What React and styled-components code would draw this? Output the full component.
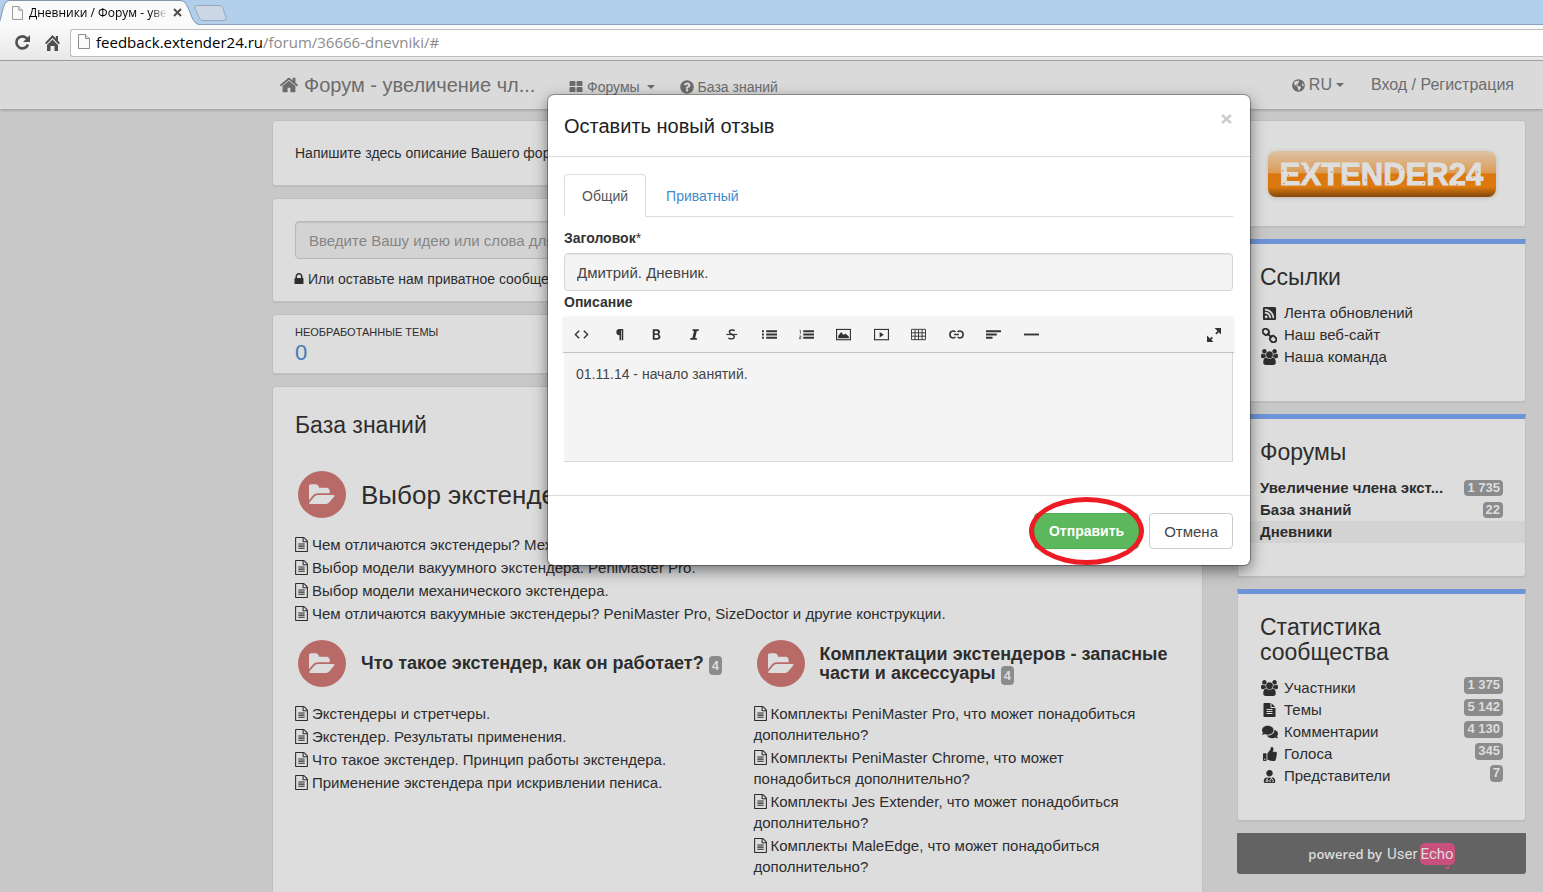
import React from 'react';
import styled, { createGlobalStyle, css } from 'styled-components';
import { FaComments, FaGlobeAmericas, FaRssSquare, FaThumbsUp, FaUserMd } from 'react-icons/fa';

const Global = createGlobalStyle`
  *, *::before, *::after { box-sizing: border-box; }
  body {
    margin: 0;
    background: #c8c8c8;
    color: #2d2d2d;
    font: 15px/21px "Liberation Sans", Arial, sans-serif;
  }
  a { color: inherit; text-decoration: none; }
  ul, h1, h2, h3, p { margin: 0; padding: 0; list-style: none; font-weight: normal; }
  button, input, textarea { font-family: inherit; margin: 0; }
`;

/* ---------- icons ---------- */

const Svg = styled.svg`
  display: inline-block;
  flex: none;
  fill: currentColor;
`;

const PATHS = {
  home: 'M1472 992v480q0 26-19 45t-45 19h-384v-384h-256v384h-384q-26 0-45-19t-19-45v-480q0-1 .5-3t.5-3l575-474 575 474q1 2 1 6zm223-69l-62 74q-8 9-21 11h-3q-13 0-21-7l-692-577-692 577q-12 8-24 7-13-2-21-11l-62-74q-8-10-7-23.5t11-21.5l719-599q32-26 76-26t76 26l244 204v-195q0-14 9-23t23-9h192q14 0 23 9t9 23v408l219 182q10 8 11 21.5t-7 23.5z',
  thLarge: 'M832 1024v384q0 52-38 90t-90 38h-512q-52 0-90-38t-38-90v-384q0-52 38-90t90-38h512q52 0 90 38t38 90zm0-768v384q0 52-38 90t-90 38h-512q-52 0-90-38t-38-90v-384q0-52 38-90t90-38h512q52 0 90 38t38 90zm896 768v384q0 52-38 90t-90 38h-512q-52 0-90-38t-38-90v-384q0-52 38-90t90-38h512q52 0 90 38t38 90zm0-768v384q0 52-38 90t-90 38h-512q-52 0-90-38t-38-90v-384q0-52 38-90t90-38h512q52 0 90 38t38 90z',
  question: 'M1024 1376v-192q0-14-9-23t-23-9h-192q-14 0-23 9t-9 23v192q0 14 9 23t23 9h192q14 0 23-9t9-23zm256-672q0-88-55.5-163t-138.5-116-170-41q-243 0-371 213-15 24 8 42l132 100q7 6 19 6 16 0 25-12 53-68 86-92 34-24 86-24 48 0 85.5 26t37.5 59q0 38-20 61t-68 45q-63 28-115.5 86.5t-52.5 125.5v36q0 14 9 23t23 9h192q14 0 23-9t9-23q0-19 21.500-49.500t54.500-49.500q32-18 49-28.500t46-35 44.500-48 28-60.500 12.500-81zm384 192q0 209-103 385.500t-279.500 279.500-385.500 103-385.500-103-279.500-279.500-103-385.500 103-385.500 279.500-279.500 385.500-103 385.500 103 279.500 279.500 103 385.500z',
  lock: 'M640 768h512v-192q0-106-75-181t-181-75-181 75-75 181v192zm832 96v576q0 40-28 68t-68 28h-960q-40 0-68-28t-28-68v-576q0-40 28-68t68-28h32v-192q0-184 132-316t316-132 316 132 132 316v192h32q40 0 68 28t28 68z',
  folder: 'M1815 952q0 31-31 66l-336 396q-43 51-120.5 86.5t-143.5 35.5h-1088q-34 0-60.500-13t-26.500-43q0-31 31-66l336-396q43-51 120.500-86.500t143.500-35.500h1088q34 0 60.500 13t26.500 43zm-343-344v160h-832q-94 0-197 47.500t-164 119.500l-337 396-5 6q0-4-.5-12.500t-.5-12.500v-960q0-92 66-158t158-66h320q92 0 158 66t66 158v32h544q92 0 158 66t66 158z',
  fileO: 'M1596 380q28 28 48 76t20 88v1152q0 40-28 68t-68 28h-1344q-40 0-68-28t-28-68v-1600q0-40 28-68t68-28h896q40 0 88 20t76 48zm-444-244v376h376q-10-29-22-41l-313-313q-12-12-41-22zm384 1528v-1024h-416q-40 0-68-28t-28-68v-416h-768v1536h1280zm-1024-864q0-14 9-23t23-9h704q14 0 23 9t9 23v64q0 14-9 23t-23 9h-704q-14 0-23-9t-9-23v-64zm736 224q14 0 23 9t9 23v64q0 14-9 23t-23 9h-704q-14 0-23-9t-9-23v-64q0-14 9-23t23-9h704zm0 256q14 0 23 9t9 23v64q0 14-9 23t-23 9h-704q-14 0-23-9t-9-23v-64q0-14 9-23t23-9h704z',
  file: 'M1596 476q14 14 28 36h-472v-472q22 14 36 28zm-476 164h544v1056q0 40-28 68t-68 28h-1344q-40 0-68-28t-28-68v-1600q0-40 28-68t68-28h800v544q0 40 28 68t68 28zm160 736v-64q0-14-9-23t-23-9h-704q-14 0-23 9t-9 23v64q0 14 9 23t23 9h704q14 0 23-9t9-23zm0-256v-64q0-14-9-23t-23-9h-704q-14 0-23 9t-9 23v64q0 14 9 23t23 9h704q14 0 23-9t9-23zm0-256v-64q0-14-9-23t-23-9h-704q-14 0-23 9t-9 23v64q0 14 9 23t23 9h704q14 0 23-9t9-23z',
  users: 'M593 896q-162 5-265 128h-134q-82 0-138-40.5t-56-118.500q0-353 124-353 6 0 43.500 21t97.500 42.500 119 21.500q67 0 133-23-5 37-5 66 0 139 81 256zm1071 637q0 120-73 189.500t-194 69.500h-874q-121 0-194-69.500t-73-189.500q0-53 3.500-103.500t14-109 26.500-108.500 43-97.500 62-81 85.500-53.500 111.500-20q10 0 43 21.500t73 48 107 48 135 21.500 135-21.500 107-48 73-48 43-21.500q61 0 111.500 20t85.500 53.500 62 81 43 97.500 26.500 108.500 14 109 3.500 103.500zm-1024-1277q0 106-75 181t-181 75-181-75-75-181 75-181 181-75 181 75 75 181zm704 384q0 159-112.500 271.500t-271.500 112.500-271.500-112.500-112.500-271.500 112.500-271.500 271.500-112.500 271.500 112.500 112.500 271.500zm576 225q0 78-56 118.500t-138 40.500h-134q-103-123-265-128 81-117 81-256 0-29-5-66 66 23 133 23 59 0 119-21.500t97.500-42.500 43.500-21q124 0 124 353zm-128-609q0 106-75 181t-181 75-181-75-75-181 75-181 181-75 181 75 75 181z',
};

const Glyph = ({ name, size = 16, width, box = '0 0 1792 1792' }) => (
  <Svg width={width || size} height={size} viewBox={box} aria-hidden="true">
    <path d={PATHS[name]} />
  </Svg>
);

const ChainIcon = () => (
  <Svg width="15" height="15" viewBox="0 0 16 16" aria-hidden="true">
    <g fill="none" stroke="currentColor" strokeWidth="2" transform="rotate(45 8 8)">
      <rect x="-1" y="5" width="7" height="6" rx="3" />
      <rect x="10" y="5" width="7" height="6" rx="3" />
      <path d="M4.500 8h7" />
    </g>
  </Svg>
);

const PageIcon = ({ width, height }) => (
  <Svg width={width} height={height} viewBox="0 0 12 15" aria-hidden="true">
    <path d="M.5.500h7l4 4v10h-11z" fill="#fafafa" stroke="#8d8d8d" />
    <path d="M7.500.500v4h4" fill="#e4e4e4" stroke="#8d8d8d" />
  </Svg>
);

const EDITOR_ICONS = {
  code: <path d="M5.500 4 1.500 8l4 4M10.500 4l4 4-4 4" fill="none" stroke="currentColor" strokeWidth="1.500" />,
  paragraph: <path d="M12 2v12h-1.500V3.500H9.800V14H8V8.800a3.400 3.400 0 0 1 0-6.800z" />,
  bold: <path fillRule="evenodd" d="M4 2.500H8.500C11 2.500 11.700 4 11.700 5.200 11.700 6.500 10.900 7.300 10.200 7.600 11.300 8 12.200 8.900 12.200 10.400 12.200 12.300 10.800 13.500 8.700 13.500H4zM6 4.200V7H8C9.200 7 9.600 6.400 9.600 5.600S9.100 4.200 8 4.200zM6 8.600V11.800H8.300C9.500 11.800 10.100 11.100 10.100 10.200S9.500 8.600 8.300 8.600z" />,
  italic: <path d="M6 2.500h6.500v1.700h-2L8.700 11.800H10.500V13.500H3.500v-1.700h2.200L7.500 4.200H6z" />,
  strike: (
    <g fill="none" stroke="currentColor" strokeWidth="1.500">
      <path d="M11.500 4C10 2.800 5.700 2.700 5.700 5.300 5.700 8 11 7.500 11 10.500 11 13.200 7 13 4.700 11.800" />
      <path d="M2.500 8h11.500" strokeWidth="1.200" />
    </g>
  ),
  list: <path d="M0 3.500h2v2H0zM0 7h2v2H0zM0 10.500h2v2H0zM4.500 3.500h11.500v2h-11.500zM4.500 7h11.500v2h-11.500zM4.500 10.500h11.500v2h-11.500z" />,
  ordered: (
    <g>
      <path d="M4.500 3.500h11.500v2h-11.500zM4.500 7h11.500v2h-11.500zM4.500 10.500h11.500v2h-11.500z" />
      <path d="M.500 3.500h1v4M.500 9.500h1.500v1.500H.500v1.500H2.500" fill="none" stroke="currentColor" strokeWidth=".7" />
    </g>
  ),
  image: (
    <g>
      <rect x=".6" y="2.600" width="14.800" height="11" fill="none" stroke="currentColor" strokeWidth="1.200" />
      <path d="M2.300 12V9.500L5.500 5.200l2.500 3.300 2-1.700 3.700 3.200v2z" />
    </g>
  ),
  video: (
    <g>
      <rect x=".6" y="2.600" width="14.800" height="11" fill="none" stroke="currentColor" strokeWidth="1.200" />
      <path d="M6 5.200 10.500 8.200 6 11.200z" />
    </g>
  ),
  table: (
    <path d="M.5 2.500h15v11h-15zM.5 6.200h15M.5 9.800h15M4.300 2.500v11M8 2.500v11M11.800 2.500v11" fill="none" stroke="currentColor" />
  ),
  link: (
    <g fill="none" stroke="currentColor" strokeWidth="1.700">
      <path d="M6.800 5.500C5.500 3.700 1 3.700 1 8s4.500 4.300 5.800 2.500M9.200 5.500C10.500 3.700 15 3.700 15 8s-4.500 4.300-5.800 2.500M5.500 8h5" />
    </g>
  ),
  align: <path d="M0 3.500h16v2H0zM0 7h11.500v2H0zM0 10.500h7v2H0z" />,
  line: <path d="M0 7h16v2H0z" />,
};

const EditorIcon = ({ name }) => (
  <Svg width="15" height="15" viewBox="0 0 16 16" aria-hidden="true">
    {EDITOR_ICONS[name]}
  </Svg>
);

/* ---------- browser chrome ---------- */

const Screen = styled.div`
  display: flex;
  flex-direction: column;
  height: 100vh;
  overflow: hidden;
`;

const TabStrip = styled.div`
  display: flex;
  height: 25px;
  background: #b1cfeb;
  border-bottom: 1px solid #8ba3bd;
`;

const BrowserTab = styled.div`
  position: relative;
  display: flex;
  align-items: center;
  width: 196px;
  height: 25px;
  padding-left: 12px;
  font: 12px/16px "Open Sans", "Noto Sans", sans-serif;
  color: #000;
`;

const TabShape = styled.svg`
  position: absolute;
  inset: 0;
  z-index: 0;
`;

const TabBody = styled.div`
  position: relative;
  display: flex;
  align-items: center;
  gap: 6px;
`;

const TabTitle = styled.span`
  width: 138px;
  overflow: hidden;
  white-space: nowrap;
  mask-image: linear-gradient(to right, #000 88%, transparent);
`;

const IconButton = styled.button`
  display: flex;
  align-items: center;
  justify-content: center;
  padding: 0;
  border: 0;
  background: none;
  color: ${(p) => p.$color || '#4f4f4f'};
`;

const Toolbar = styled.div`
  display: flex;
  align-items: center;
  flex: none;
  gap: 14px;
  height: 36px;
  padding-left: 14px;
  background: linear-gradient(#fafafa, #e8e8e8);
  border-bottom: 1px solid #a6a6a6;
`;

const AddressBar = styled.div`
  display: flex;
  align-items: center;
  flex: 1;
  gap: 6px;
  height: 28px;
  margin-left: -4px;
  padding: 0 0 2px 7px;
  background: #fff;
  border: 1px solid #bdbdbd;
  border-right: 0;
  border-radius: 3px 0 0 3px;
  font: 15px/20px "Open Sans", "Noto Sans", sans-serif;
  color: #8b8b8b;
  b { font-weight: normal; color: #000; }
`;

/* ---------- site ---------- */

const Site = styled.div`
  position: relative;
  display: flex;
  flex-direction: column;
  flex: 1;
  min-height: 0;
`;

const Navbar = styled.nav`
  display: flex;
  align-items: center;
  flex: none;
  height: 48px;
  padding: 0 29px 0 279px;
  background: #dadada;
  box-shadow: 0 1px 3px rgba(0, 0, 0, 0.25);
  color: #6c6c6c;
`;

const Brand = styled.a`
  display: flex;
  align-items: center;
  gap: 5px;
  width: 290px;
  font-size: 20px;
  line-height: 24px;
  white-space: nowrap;
`;

const NavLink = styled.a`
  display: flex;
  align-items: center;
  gap: 4px;
  font-size: ${(p) => (p.$small ? 14 : 16)}px;
  line-height: 20px;
  padding-top: ${(p) => (p.$small ? 4 : 0)}px;
  margin-right: ${(p) => p.$gap || 0}px;
`;

const Caret = styled.i`
  border: 4px solid transparent;
  border-top-color: currentColor;
  border-bottom: 0;
  margin-left: ${(p) => p.$gap || 0}px;
`;

const Spacer = styled.div`flex: 1;`;

const Layout = styled.div`
  display: grid;
  grid-template-columns: minmax(0, 1fr) 289px;
  gap: 34px;
  flex: 1;
  min-height: 0;
  padding: 11px 17px 0 272px;
`;

const Column = styled.div`
  display: flex;
  flex-direction: column;
  gap: 12px;
  min-height: 0;
`;

const Card = styled.section`
  flex: ${(p) => (p.$grow ? '1 0 auto' : 'none')};
  padding: ${(p) => p.$pad};
  background: #ddd;
  border: 1px solid #bfbfbf;
  border-radius: 3px;
  box-shadow: 0 1px 0 #bdbdbd;
  ${(p) => p.$grow && css`border-bottom: 0; border-radius: 3px 3px 0 0;`}
`;

const Intro = styled.p`
  font-size: 14px;
  line-height: 20px;
`;

const SearchInput = styled.input`
  display: block;
  width: 100%;
  height: 38px;
  padding: 0 13px;
  border: 1px solid #b7b7b7;
  border-radius: 4px;
  background: #d3d3d3;
  box-shadow: inset 0 1px 1px rgba(0, 0, 0, 0.08);
  font-size: 15px;
  &::placeholder { color: #868686; opacity: 1; }
`;

const PrivateLink = styled.a`
  display: flex;
  align-items: center;
  gap: 4px;
  margin: 10px 0 0 -1px;
  font-size: 14px;
  line-height: 20px;
`;

const CounterLabel = styled.div`
  font-size: 11px;
  line-height: 14px;
  text-transform: uppercase;
`;

const CounterValue = styled.div`
  font-size: 22px;
  line-height: 27px;
  color: #3f7cb3;
`;

const Title = styled.h2`
  font-size: 23px;
  line-height: 25px;
`;

const Topics = styled.div`
  display: grid;
  grid-template-columns: 1fr 1fr;
  gap: 32px;
  margin-top: 33px;
`;

const WideTopic = styled.div`
  grid-column: 1 / -1;
  margin-bottom: -18px;
`;

const TopicHead = styled.div`
  display: flex;
  align-items: center;
  gap: 15px;
  height: 47px;
  margin: 0 -8px 16px 3px;
`;

const FolderDisc = styled.span`
  display: flex;
  align-items: center;
  justify-content: center;
  flex: none;
  width: 48px;
  height: 47px;
  border-radius: 50%;
  background: #b76a66;
  color: #ddd;
`;

const TopicTitle = styled.h3`
  font-size: ${(p) => (p.$large ? 26 : 18)}px;
  line-height: ${(p) => (p.$large ? 30 : 19)}px;
  font-weight: ${(p) => (p.$large ? 'normal' : 'bold')};
`;

const Badge = styled.span`
  display: inline-block;
  padding: ${(p) => (p.$raised ? '0 3px 2px' : '0 3px 1px')};
  border-radius: 4px;
  background: #8b8b8b;
  color: #ddd;
  font-size: 13px;
  line-height: 15px;
  font-weight: bold;
`;

const TitleBadge = styled(Badge)`
  margin: -4px 0;
  padding: 2px 3px;
  vertical-align: -1px;
`;

const ArticleList = styled.ul`
  padding-right: 16px;
  li { margin-bottom: 2px; }
  svg { margin-right: 4px; vertical-align: -2px; }
`;

const SideCard = styled.section`
  flex: none;
  padding: 21px 22px 33px;
  background: #ddd;
  border: 1px solid #bfbfbf;
  border-top: 5px solid #6e94d8;
  border-radius: 0 0 3px 3px;
  box-shadow: 0 1px 0 #bdbdbd;
`;

const SideList = styled.ul`margin-top: 12px;`;

const SideRow = styled.li`
  display: flex;
  align-items: ${(p) => (p.$raised ? 'flex-start' : 'center')};
  gap: 8px;
  height: 22px;
  line-height: 22px;
  font-weight: ${(p) => (p.$bold ? 'bold' : 'normal')};
  ${(p) => p.$active && css`
    margin: 0 -22px;
    padding: 0 22px;
    background: #d3d3d3;
  `}
  a {
    display: flex;
    align-items: center;
    gap: 5px;
    flex: 1;
    min-width: 0;
    white-space: nowrap;
  }
`;

const IconSlot = styled.i`
  display: flex;
  justify-content: center;
  width: 19px;
`;

const LogoCard = styled(Card)`
  display: flex;
  justify-content: center;
`;

const Logo = styled.a`
  position: relative;
  display: flex;
  align-items: center;
  justify-content: center;
  width: 228px;
  height: 46px;
  padding-top: 2px;
  border-radius: 8px;
  background: linear-gradient(#dcc3a6 0%, #dc9c56 47%, #da780f 50%, #dc7a10 78%, #8a4c0c 98%);
  box-shadow: 0 1px 4px rgba(90, 60, 20, 0.2);
  color: #dedede;
  font-size: 31px;
  line-height: 46px;
  font-weight: bold;
  -webkit-text-stroke: 1px #dedede;
`;

const LogoWear = styled.svg`
  position: absolute;
  inset: 0;
`;

const Powered = styled.a`
  display: flex;
  align-items: center;
  justify-content: center;
  flex: none;
  height: 41px;
  border-radius: 0 0 3px 3px;
  background: #636363;
  color: #ddd;
  font: 600 13px/20px "Open Sans", sans-serif;
`;

const UserWord = styled.b`
  margin: 0 2px 0 5px;
  font: 15px/22px Roboto, "Liberation Sans", sans-serif;
`;

const EchoWord = styled(UserWord)`
  position: relative;
  margin: 0;
  padding: 0 1px;
  border-radius: 5px;
  background: #c94f7c;
  &::after {
    content: "";
    position: absolute;
    right: 6px;
    bottom: -4px;
    border: 4px solid transparent;
    border-right-color: #c94f7c;
    border-bottom: 0;
  }
`;

/* ---------- dialog ---------- */

const Overlay = styled.div`
  position: absolute;
  inset: 0;
  padding: 34px 293px 0 548px;
`;

const Dialog = styled.form`
  position: relative;
  background: #fff;
  border-radius: 6px;
  box-shadow: 0 0 0 1px rgba(0, 0, 0, 0.3), 0 5px 15px rgba(0, 0, 0, 0.5);
  color: #333;
`;

const DialogHead = styled.header`
  display: flex;
  align-items: flex-start;
  justify-content: space-between;
  height: 62px;
  padding: 19px 17px 0 16px;
  border-bottom: 1px solid #dcdcdc;
  h2 { font-size: 20px; line-height: 24px; color: #222; }
`;

const DialogBody = styled.div`padding: 17px 17px 33px 16px;`;

const Tabs = styled.div`
  display: flex;
  height: 43px;
  border-bottom: 1px solid #ddd;
`;

const TabButton = styled.button`
  height: 43px;
  padding: 0 17px;
  border: 1px solid ${(p) => (p.$active ? '#ddd' : 'transparent')};
  border-bottom-color: ${(p) => (p.$active ? '#fff' : 'transparent')};
  border-radius: 4px 4px 0 0;
  background: ${(p) => (p.$active ? '#fff' : 'none')};
  color: ${(p) => (p.$active ? '#555' : '#428bca')};
  font-size: 14px;
  margin-right: 2px;
`;

const Field = styled.div`
  label {
    display: block;
    margin-bottom: 5px;
    font-size: 14px;
    line-height: 20px;
    font-weight: bold;
  }
  label span { font-weight: normal; }
  margin-top: ${(p) => p.$top}px;
`;

const TextInput = styled.input`
  display: block;
  width: 100%;
  height: 38px;
  padding: 0 12px;
  border: 1px solid #d5d5d5;
  border-radius: 4px;
  background: #f4f4f4;
  box-shadow: inset 0 1px 1px rgba(0, 0, 0, 0.06);
  color: #444;
  font-size: 15px;
`;

const EditorBar = styled.div`
  display: flex;
  justify-content: space-between;
  height: 36px;
  margin: 0 -1px;
  background: #f4f4f4;
  border-bottom: 1px solid #c4c4c4;
  border-radius: 3px 3px 0 0;
  box-shadow: 0 0 2px rgba(0, 0, 0, 0.12);
`;

const EditorGroup = styled.div`
  display: grid;
  grid-template-columns: repeat(13, 1fr);
  width: 487px;
`;

const ExpandButton = styled(IconButton)`width: 40px;`;

const TextArea = styled.textarea`
  display: block;
  width: 100%;
  height: 109px;
  padding: 11px;
  border: 1px solid #d8d8d8;
  border-top: 0;
  border-left-color: #f4f4f4;
  background: #f4f4f4;
  color: #444;
  font-size: 14px;
  line-height: 20px;
  resize: none;
`;

const DialogFoot = styled.footer`
  display: flex;
  justify-content: flex-end;
  gap: 10px;
  padding: 17px 17px 16px;
  border-top: 1px solid #dcdcdc;
`;

const Button = styled.button`
  height: 36px;
  padding: 0 14px;
  border: 1px solid ${(p) => (p.$primary ? '#4cae4c' : '#ccc')};
  border-radius: 4px;
  background: ${(p) => (p.$primary ? '#5cb85c' : '#fff')};
  color: ${(p) => (p.$primary ? '#fff' : '#444')};
  font-size: ${(p) => (p.$primary ? 14 : 15)}px;
  font-weight: ${(p) => (p.$primary ? 'bold' : 'normal')};
  white-space: nowrap;
`;

const Marked = styled.span`
  position: relative;
  display: flex;
`;

const Ring = styled.span`
  position: absolute;
  inset: -16px -5px;
  border: 5px solid #ed1c24;
  border-radius: 50%;
  pointer-events: none;
`;

/* ---------- data ---------- */

const MAIN_ARTICLES = [
  'Чем отличаются экстендеры? Механические и вакуумные.',
  'Выбор модели вакуумного экстендера. PeniMaster Pro.',
  'Выбор модели механического экстендера.',
  'Чем отличаются вакуумные экстендеры? PeniMaster Pro, SizeDoctor и другие конструкции.',
];

const TOPICS = [
  {
    title: 'Что такое экстендер, как он работает?',
    items: [
      'Экстендеры и стретчеры.',
      'Экстендер. Результаты применения.',
      'Что такое экстендер. Принцип работы экстендера.',
      'Применение экстендера при искривлении пениса.',
    ],
  },
  {
    title: 'Комплектации экстендеров - запасные части и аксессуары',
    items: [
      'Комплекты PeniMaster Pro, что может понадобиться дополнительно?',
      'Комплекты PeniMaster Chrome, что может понадобиться дополнительно?',
      'Комплекты Jes Extender, что может понадобиться дополнительно?',
      'Комплекты MaleEdge, что может понадобиться дополнительно?',
    ],
  },
];

const Users = <Glyph name="users" size={16} width={17} box="0 0 1920 1792" />;

const LINKS = [
  ['Лента обновлений', <FaRssSquare size={15} />],
  ['Наш веб-сайт', <ChainIcon />],
  ['Наша команда', Users],
];

const FORUMS = [
  ['Увеличение члена экст...', '1 735'],
  ['База знаний', '22'],
  ['Дневники', null],
];

const STATS = [
  ['Участники', '1 375', Users],
  ['Темы', '5 142', <Glyph name="file" size={14} width={13} box="128 0 1536 1792" />],
  ['Комментарии', '4 130', <FaComments size={16} />],
  ['Голоса', '345', <FaThumbsUp size={14} />],
  ['Представители', '7', <FaUserMd size={13} />],
];

const TOOLS = [
  ['code', 'HTML'], ['paragraph', 'Форматирование'], ['bold', 'Полужирный'], ['italic', 'Наклонный'],
  ['strike', 'Зачёркнутый'], ['list', 'Список'], ['ordered', 'Нумерованный список'], ['image', 'Изображение'],
  ['video', 'Видео'], ['table', 'Таблица'], ['link', 'Ссылка'], ['align', 'Выравнивание'], ['line', 'Линия'],
];

/* ---------- parts ---------- */

const Articles = ({ items }) => (
  <ArticleList>
    {items.map((text) => (
      <li key={text}>
        <a href="#"><Glyph name="fileO" size={15} width={13} box="128 0 1536 1792" />{text}</a>
      </li>
    ))}
  </ArticleList>
);

const Topic = ({ title, large, count, items }) => (
  <div>
    <TopicHead>
      <FolderDisc><Glyph name="folder" size={26} box="0 0 1852 1792" /></FolderDisc>
      <TopicTitle $large={large}>
        {title}{count && <> <TitleBadge>{count}</TitleBadge></>}
      </TopicTitle>
    </TopicHead>
    <Articles items={items} />
  </div>
);

const Chrome = () => (
  <>
    <TabStrip>
      <BrowserTab>
        <TabShape width="232" height="25" aria-hidden="true">
          <path d="M-2 25C2 20 2 1 9 .500H181C190 1 190 24 199 24.500V26H-2z" fill="#fafafa" stroke="#8195ab" />
          <path d="M197 5.500h22q3 0 4 3l3 9q1 3-2 3h-21q-3 0-4-3l-4-9q-1-3 2-3z" fill="#cbd7e4" stroke="#95a8bd" />
        </TabShape>
        <TabBody>
          <PageIcon width={11} height={14} />
          <TabTitle>Дневники / Форум - увел</TabTitle>
          <IconButton type="button" aria-label="Закрыть вкладку">
            <Svg width="9" height="9" viewBox="0 0 9 9"><path d="m1 1 7 7m0-7-7 7" stroke="currentColor" strokeWidth="2" /></Svg>
          </IconButton>
        </TabBody>
      </BrowserTab>
    </TabStrip>
    <Toolbar>
      <IconButton type="button" aria-label="Обновить">
        <Svg width="17" height="17" viewBox="0 0 17 17">
          <path d="M13 4.500A6 6 0 1 0 14 10.500" fill="none" stroke="currentColor" strokeWidth="2.600" />
          <path d="M16 1v7H9z" />
        </Svg>
      </IconButton>
      <IconButton type="button" aria-label="Домой">
        <Svg width="15" height="16" viewBox="0 0 15 16">
          <path d="M7.500 0 0 8l1.500 1.200L7.500 3l6 6.200L15 8l-2-2.200V1h-2.200v2.500z" />
          <path d="M2 10 7.500 4.500 13 10v6H9.500v-5h-4v5H2z" />
        </Svg>
      </IconButton>
      <AddressBar>
        <PageIcon width={12} height={15} />
        <span><b>feedback.extender24.ru</b>/forum/36666-dnevniki/#</span>
      </AddressBar>
    </Toolbar>
  </>
);

const Header = () => (
  <Navbar>
    <Brand href="#"><Glyph name="home" size={20} />Форум - увеличение чл...</Brand>
    <NavLink href="#" $small $gap={25}><Glyph name="thLarge" size={14} />Форумы<Caret $gap={3} /></NavLink>
    <NavLink href="#" $small><Glyph name="question" size={14} box="100 100 1592 1592" />База знаний</NavLink>
    <Spacer />
    <NavLink href="#" $gap={27}><FaGlobeAmericas size={13} />RU<Caret /></NavLink>
    <NavLink href="#">Вход / Регистрация</NavLink>
  </Navbar>
);

const Sidebar = () => (
  <Column as="aside">
    <LogoCard $pad="30px 0 29px">
      <Logo href="#">
        EXTENDER24
        <LogoWear width="228" height="46" aria-hidden="true">
          <path d="M14 19l2 1M20 23l1 2M15 33l2-1M27 36l1-2M34 15l2 1M41 18l1 2M37 27l1 1M46 34l1-1M56 29l1 2M63 20l1 2M58 35l2-1M72 18l1 1M78 25l2 0M75 33l1 2M90 20l1 2M97 28l1 2M93 34l2-1M104 30l1 1M114 19l1 1M119 33l2-1M125 25l1 2M133 18l1 1M138 26l2 0M134 35l1-1M148 19l1 1M157 26l1 2M154 33l2-1M170 35l1-1M176 24l2 1M172 17l1 1M188 34l2-1M197 32l1 1M204 27l1-1M209 20l1 2M213 33l1-1" stroke="#d98a3a" strokeWidth="1" fill="none" />
        </LogoWear>
      </Logo>
    </LogoCard>
    <SideCard>
      <Title>Ссылки</Title>
      <SideList>
        {LINKS.map(([text, icon]) => (
          <SideRow key={text}><a href="#"><IconSlot>{icon}</IconSlot><span>{text}</span></a></SideRow>
        ))}
      </SideList>
    </SideCard>
    <SideCard>
      <Title>Форумы</Title>
      <SideList>
        {FORUMS.map(([text, count]) => (
          <SideRow key={text} $bold $active={!count}>
            <a href="#"><span>{text}</span></a>
            {count && <Badge>{count}</Badge>}
          </SideRow>
        ))}
      </SideList>
    </SideCard>
    <SideCard>
      <Title>Статистика<br />сообщества</Title>
      <SideList>
        {STATS.map(([text, count, icon]) => (
          <SideRow key={text} $raised>
            <a href="#"><IconSlot>{icon}</IconSlot><span>{text}</span></a>
            <Badge $raised>{count}</Badge>
          </SideRow>
        ))}
      </SideList>
    </SideCard>
    <Powered href="#">powered by<UserWord>User</UserWord><EchoWord>Echo</EchoWord></Powered>
  </Column>
);

const FeedbackDialog = () => (
  <Overlay>
    <Dialog role="dialog" aria-labelledby="dialog-title" onSubmit={(e) => e.preventDefault()}>
      <DialogHead>
        <h2 id="dialog-title">Оставить новый отзыв</h2>
        <IconButton type="button" aria-label="Закрыть" $color="#ccc">
          <Svg width="13" height="10" viewBox="0 0 13 10"><path d="m2 1 9 8m0-8-9 8" stroke="currentColor" strokeWidth="2.500" /></Svg>
        </IconButton>
      </DialogHead>
      <DialogBody>
        <Tabs role="tablist">
          <TabButton type="button" role="tab" aria-selected="true" $active>Общий</TabButton>
          <TabButton type="button" role="tab" aria-selected="false">Приватный</TabButton>
        </Tabs>
        <Field $top={11}>
          <label htmlFor="topic-title">Заголовок<span>*</span></label>
          <TextInput id="topic-title" defaultValue="Дмитрий. Дневник." />
        </Field>
        <Field $top={1}>
          <label htmlFor="topic-text">Описание</label>
          <EditorBar>
            <EditorGroup>
              {TOOLS.map(([name, label]) => (
                <IconButton key={name} type="button" aria-label={label} $color="#333"><EditorIcon name={name} /></IconButton>
              ))}
            </EditorGroup>
            <ExpandButton type="button" aria-label="На весь экран" $color="#333">
              <Svg width="14" height="14" viewBox="0 0 14 14">
                <path d="M7.500 0H14v6.500L11.800 4.300 9.500 6.500 8.300 5.300 10.500 3zM0 7.500V14h6.500L4.300 11.800 6 10 4.800 8.800 3 10.500z" />
              </Svg>
            </ExpandButton>
          </EditorBar>
          <TextArea id="topic-text" defaultValue="01.11.14 - начало занятий." />
        </Field>
      </DialogBody>
      <DialogFoot>
        <Marked>
          <Button type="submit" $primary>Отправить</Button>
          <Ring />
        </Marked>
        <Button type="button">Отмена</Button>
      </DialogFoot>
    </Dialog>
  </Overlay>
);

export default function App() {
  return (
    <Screen>
      <Global />
      <Chrome />
      <Site>
        <Header />
        <Layout>
          <Column as="main">
            <Card $pad="22px"><Intro>Напишите здесь описание Вашего форума</Intro></Card>
            <Card $pad="22px 22px 12px">
              <SearchInput aria-label="Поиск" placeholder="Введите Вашу идею или слова для поиска" />
              <PrivateLink href="#">
                <Glyph name="lock" size={14} width={10} box="256 0 1280 1792" />Или оставьте нам приватное сообщение
              </PrivateLink>
            </Card>
            <Card $pad="10px 22px 7px">
              <CounterLabel>Необработанные темы</CounterLabel>
              <CounterValue>0</CounterValue>
            </Card>
            <Card $grow $pad="26px 22px 0">
              <Title>База знаний</Title>
              <Topics>
                <WideTopic><Topic title="Выбор экстендера" large items={MAIN_ARTICLES} /></WideTopic>
                {TOPICS.map((t) => <Topic key={t.title} count={4} {...t} />)}
              </Topics>
            </Card>
          </Column>
          <Sidebar />
        </Layout>
        <FeedbackDialog />
      </Site>
    </Screen>
  );
}
